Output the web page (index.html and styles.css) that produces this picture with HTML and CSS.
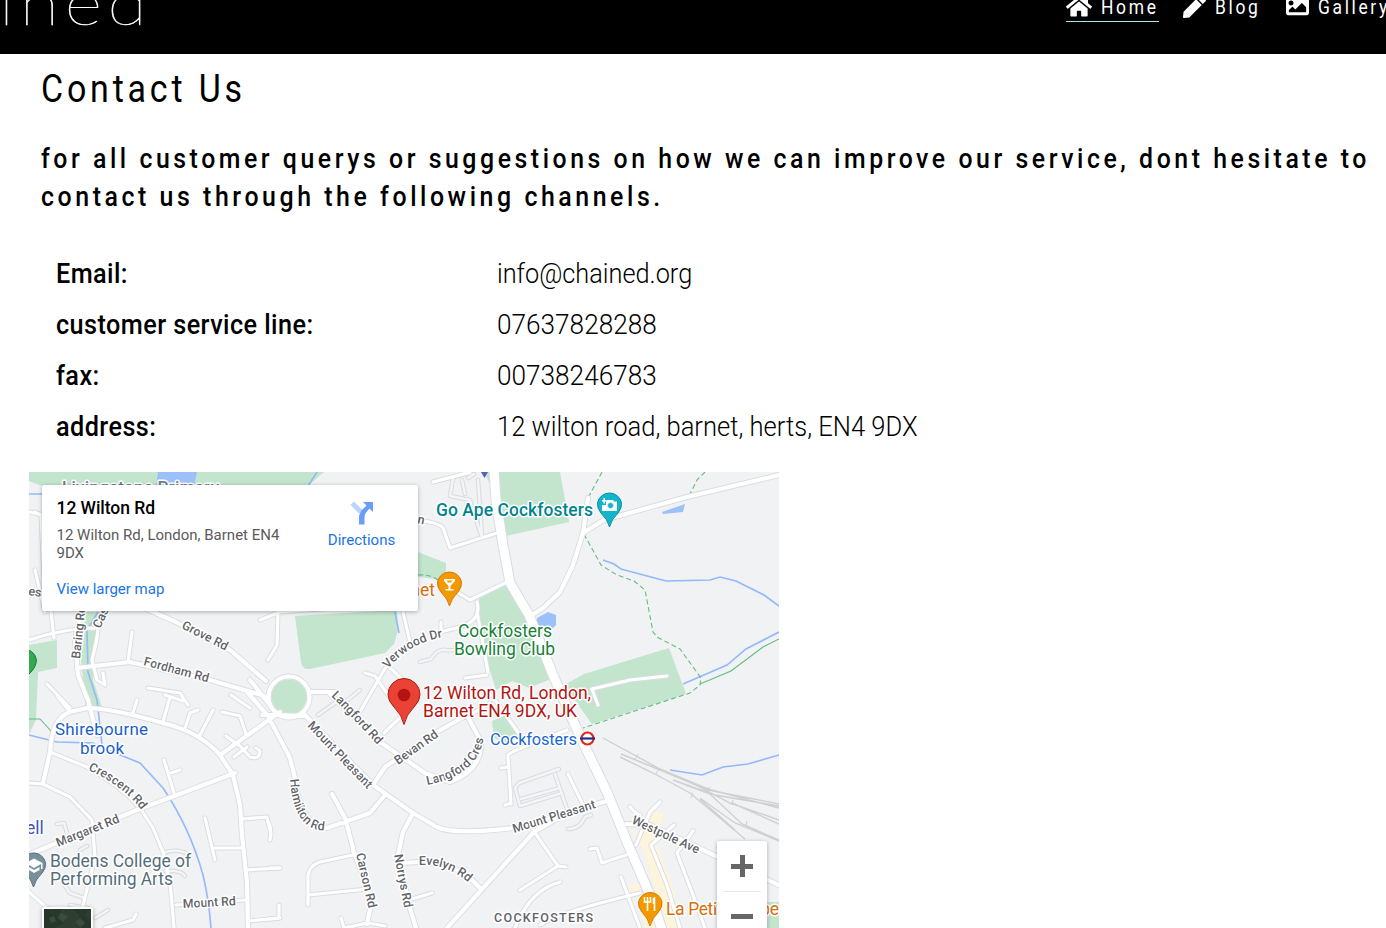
FILE: index.html
```html
<!DOCTYPE html>
<html lang="en">
<head>
<meta charset="utf-8">
<title>Chained - Contact Us</title>
<link rel="stylesheet" href="styles.css">
</head>
<body>
<header class="site-header">
  <div class="logo">ined</div>
  <nav class="nav">
    <a class="nav-link active"><svg class="icon icon-home" viewBox="0 0 576 512"><path d="M280.37 148.26L96 300.11V464a16 16 0 0 0 16 16l112.06-.29a16 16 0 0 0 15.92-16V368a16 16 0 0 1 16-16h64a16 16 0 0 1 16 16v95.64a16 16 0 0 0 16 16.05L464 480a16 16 0 0 0 16-16V300L295.67 148.26a12.19 12.19 0 0 0-15.3 0zM571.6 251.47L488 182.56V44.05a12 12 0 0 0-12-12h-56a12 12 0 0 0-12 12v72.61L318.47 43a48 48 0 0 0-61 0L4.34 251.47a12 12 0 0 0-1.6 16.9l25.5 31A12 12 0 0 0 45.15 301l235.22-193.74a12.19 12.19 0 0 1 15.3 0L530.9 301a12 12 0 0 0 16.9-1.6l25.5-31a12 12 0 0 0-1.7-16.93z"/></svg><span class="nav-text">Home</span></a>
    <a class="nav-link blog"><svg class="icon" viewBox="0 0 512 512"><path d="M290.74 93.24l128.02 128.02-277.99 277.99-114.14 12.6C11.35 513.54-1.56 500.62.14 485.34l12.7-114.22 277.9-277.88zm207.2-19.06l-60.11-60.11c-18.75-18.75-49.16-18.75-67.91 0l-56.55 56.55 128.02 128.02 56.55-56.55c18.75-18.76 18.75-49.16 0-67.91z"/></svg><span class="nav-text">Blog</span></a>
    <a class="nav-link"><svg class="icon" viewBox="0 0 512 512"><path d="M464 448H48c-26.51 0-48-21.49-48-48V112c0-26.51 21.49-48 48-48h416c26.51 0 48 21.49 48 48v288c0 26.51-21.49 48-48 48zM112 120c-30.928 0-56 25.072-56 56s25.072 56 56 56 56-25.072 56-56-25.072-56-56-56zM64 384h384V272l-87.515-87.515c-4.686-4.686-12.284-4.686-16.971 0L208 320l-55.515-55.515c-4.686-4.686-12.284-4.686-16.971 0L64 336v48z"/></svg><span class="nav-text">Gallery</span></a>
  </nav>
</header>
<main class="content">
  <h1 class="title"><span class="fit fit-title">Contact Us</span></h1>
  <p class="intro"><span class="fit fit-a">for all customer querys or suggestions on how we can improve our service, dont hesitate to</span><span class="fit fit-b">contact us through the following channels.</span></p>
  <dl class="details">
    <dt><span class="fit key">Email:</span></dt><dd><span class="fit mail">info@chained.org</span></dd>
    <dt><span class="fit key">customer service line:</span></dt><dd><span class="fit phone">07637828288</span></dd>
    <dt><span class="fit key">fax:</span></dt><dd><span class="fit phone">00738246783</span></dd>
    <dt><span class="fit key">address:</span></dt><dd><span class="fit street">12 wilton road, barnet, herts, EN4 9DX</span></dd>
  </dl>
  <section class="map">
    <svg class="map-canvas" viewBox="29 472 750 456">
      <defs>
        <g id="lanes">
          <path d="M433 482L470 473M453 479L450 496L470 500L481 535M462 480L465 494M468 478L474 474M478 480L482 535M420 662L431 659Q438 648 446 650L470 651"/>
          <path d="M515 788L520 806 562 793M515 788L519 783 559 769M555 774L568 812M521 799L560 788M568 829Q580 829 585 817L591 815"/>
          <path d="M57 824L64 823 69 840M80 850L87 846M163 853Q180 847 190 856M165 871Q182 870 185 876M95 918L108 910M60 878L70 893 84 898M70 905L88 908"/>
          <path d="M318 715L335 703 344 703 360 690"/>
        </g>
        <g id="streets">
          <path d="M29 640Q65 628 95 628M51 612L54 638M47 684L70 708M95 628Q102 620 92 660L97 680 105 685 103 673M128 662L132 632M148 688L180 693 188 705M133 713L137 700M170 697L163 722M165 695L183 701M185 728L190 713 198 710M200 735L213 710M226 736L240 746 250 757Q260 760 260 751L256 748M234 757L247 747M222 712L240 716 246 734M231 695L250 708M58 697L70 712M164 760L175 796M171 773L180 770M205 818L215 860M215 848L241 848M242 819L267 817 271 835M245 870L280 868M248 921L280 918M35 512L48 520M35 570L45 612"/>
          <path d="M29 512L45 515M41 515L45 600M270 868L280 868M270 919L279 918 279 905M270 840Q272 827 268 822M308 905L308 875Q310 865 320 862L353 855M308 895L368 889M341 918L344 928L368 923 385 926M412 899L432 893M433 482L470 472M418 520Q440 523 443 528L450 548 497 533M450 588L470 600 507 582M440 632L460 627Q482 620 477 602M441 632L441 622M410 642L403 612M387 665L358 715M365 673L375 676 388 695M387 665L405 682M487 675L465 678M477 612L488 672M260 620L280 612 400 603M278 610L277 645 268 660"/>
          <path d="M511 804L508 755 512 752 567 730M501 768L508 767M505 805L511 803M495 700L520 735M384 733L412 706M467 717L490 703M590 849L597 848 602 863 626 855M533 830L558 866 520 890M558 866L566 867M568 774L584 807M621 877L640 928M636 845L650 812 660 802M630 807Q635 813 640 815M674 825L651 845 667 885 680 928M693 831L677 853 693 895 705 928M515 928Q530 890 560 882M540 925Q560 912 640 893M592 689L630 680 667 676M592 689L598 705"/>
          <path d="M50 752L87 767Q120 785 140 808L153 828 163 852 170 882 174 928M29 783L43 784 70 797 92 820 95 858 83 905M29 892L47 908 60 928M176 905L245 900M105 928L133 920 136 914"/>
        </g>
        <g id="avenues">
          <path d="M43 783L50 752Q52 718 70 712L87 708Q110 708 163 723Q200 732 220 755L233 775 240 805 242 835 247 882 248 928M30 854L137 810 235 773M220 755L280 712M82 610L75 640 78 675 88 700 97 735M77 668L130 662 210 680 268 697M140 606L176 622 230 650 266 681M250 680L270 705M247 692L268 716 290 758 295 778Q300 825 327 828L370 813 385 795M262 715L280 715 303 716M303 713L373 785 413 813 437 827Q453 835 513 828L607 801M373 785L385 767 437 732 467 715 481 742Q482 770 450 782L425 773 380 742 330 694M332 794L345 818 353 848M353 850L365 880 371 905 367 924M413 813L403 832 398 855 410 908 416 928M400 863L420 862Q455 860 480 888M447 928L534 832 567 813M310 692L334 692"/>
          <circle cx="289" cy="697" r="20.5"/>
          <path d="M532 615L543 608 560 592 573 565 583 533 588 498M583 533L604 520 687 497 779 475M626 824L650 825 720 858 779 885"/>
        </g>
        <path id="trunk" d="M494 470L496 500 503 545 510 583 529 615 553 675 575 725 590 757 607 792 627 842 653 902 662 930"/>
        <path id="c-langford" d="M331 696Q355 720 382 750"/>
        <path id="c-mount" d="M307 726L369 791"/>
        <path id="c-hamilton" d="M290 779Q294 836 332 830"/>
        <path id="c-cres" d="M427 785Q480 775 484 735"/>
        <path id="c-crescent" d="M88 770Q125 786 145 815"/>
        <path id="c-evelyn" d="M419 865Q445 863 468 882"/>
        <path id="c-verwood" d="M388 669Q410 642 444 637"/>
      </defs>

      <rect class="land" x="29" y="472" width="750" height="456"/>
      <g class="park">
        <path d="M29 472H324L308 486H42L29 481z"/>
        <path d="M484 472H560L569 522 506 536 498 500z"/>
        <path d="M418 552L446 563V580L418 577z"/>
        <path d="M295 616L397 610 398 630 394 644 385 653 310 669Q302 670 301 662z"/>
        <path d="M479 596L509 583 553 678 529 688 512 681 496 690 480 638z"/>
        <path d="M564 685L584 674 669 648 686 694 592 724z"/>
        <path d="M492 721L505 716 518 733 508 745 494 738z"/>
        <path d="M29 645L57 640V668L38 672 36 720 29 734z"/>
        <path d="M86 612H110L96 626 93 680 103 710H86L80 650z"/>
        <circle cx="289" cy="697" r="17.5"/>
        <path d="M767 902H779V928H767z"/>
      </g>
      <g class="shops"><path d="M630 827L640 835 655 811 664 814 656 842 674 890 678 928H665L644 850zM628 884L638 884 641 892 631 894zM637 900L650 895 662 928H645z"/></g>
      <g class="water-fill"><path d="M158 472H197L194 486H156zM537 618L548 612 556 615V625L553 628H537zM662 512L685 504 683 512 663 514z"/></g>
      <g class="water">
        <path d="M29 494H42M98 612L87 630 88 672 97 700 102 745M29 735L57 742 93 743 103 748 140 763 163 788Q190 828 203 875Q209 900 211 928M317 472L308 486M395 612L399 633"/>
        <path d="M603 560L614 564 621 569 666 581 710 580 720 577 736 581 764 595 779 606M683 684L727 665 746 649 779 632M670 770L702 775 723 767 748 764 779 755"/>
      </g>
      <g class="trail">
        <path class="dash" d="M602 472L588 498M584 534L601 565 617 575 634 581 645 590 653 632 657 637 680 649 701 678 700 685 690 693 583 728M705 472L697 480 689 496M418 575Q430 574 438 580"/>
        <path d="M700 684L731 671 763 647 779 639M29 719H40L51 731"/>
      </g>
      <g class="rail">
        <path d="M603 738L660 769 708 789 779 808M621 754L660 770 708 790 779 804M620 757L655 774 690 793 745 839M621 754L690 782 730 803 779 820M673 780L715 795 779 806M673 780L710 794 742 824 779 840M700 798L735 823 779 841M732 803L779 824M700 799L735 830"/>
        <path class="thin" d="M638 754l-3 5M659 768l-3 6M693 793l-2 5M709 787l-1 6M733 800l-1 5M747 821l-1 5"/>
      </g>

      <use class="case lane-case" href="#lanes"/>
      <use class="case street-case" href="#streets"/>
      <use class="case avenue-case" href="#avenues"/>
      <use class="case trunk-case" href="#trunk"/>
      <use class="fill lane-fill" href="#lanes"/>
      <use class="fill street-fill" href="#streets"/>
      <use class="fill avenue-fill" href="#avenues"/>
      <use class="fill trunk-fill" href="#trunk"/>

      <g class="label road">
        <text x="62" y="493" class="school" textLength="157">Livingstone Primary</text>
        <text x="28" y="595" transform="rotate(8 28 595)">es</text>
        <text x="417" y="523" transform="rotate(12 417 523)">n</text>
        <text transform="translate(80 659) rotate(-84)" textLength="53">Baring Rd</text>
        <text transform="translate(100 629) rotate(-65)">Cas</text>
        <text transform="translate(181 628) rotate(27)" textLength="50">Grove Rd</text>
        <text transform="translate(143 665) rotate(15)" textLength="67">Fordham Rd</text>
        <text><textPath href="#c-verwood">Verwood Dr</textPath></text>
        <text><textPath href="#c-langford">Langford Rd</textPath></text>
        <text><textPath href="#c-mount">Mount Pleasant</textPath></text>
        <text transform="translate(398 765) rotate(-35)" textLength="50">Bevan Rd</text>
        <text><textPath href="#c-cres">Langford Cres</textPath></text>
        <text><textPath href="#c-hamilton">Hamilton Rd</textPath></text>
        <text><textPath href="#c-crescent">Crescent Rd</textPath></text>
        <text transform="translate(58 847) rotate(-22)" textLength="67">Margaret Rd</text>
        <text transform="translate(183 908) rotate(-3)" textLength="53">Mount Rd</text>
        <text transform="translate(356 854) rotate(77)" textLength="56">Carson Rd</text>
        <text transform="translate(394 855) rotate(79)" textLength="54">Norrys Rd</text>
        <text><textPath href="#c-evelyn">Evelyn Rd</textPath></text>
        <text transform="translate(514 833) rotate(-17)" textLength="86">Mount Pleasant</text>
        <text transform="translate(631 823) rotate(25)" textLength="73">Westpole Ave</text>
        <text x="494" y="922" class="area" textLength="99">COCKFOSTERS</text>
      </g>
      <g class="label place">
        <text class="teal" x="436" y="516" textLength="157">Go Ape Cockfosters</text>
        <text class="orange" x="435" y="596" text-anchor="end">inet</text>
        <text class="green" x="458" y="637" textLength="94">Cockfosters</text>
        <text class="green" x="454" y="655" textLength="101">Bowling Club</text>
        <text class="red" x="423" y="699" textLength="168">12 Wilton Rd, London,</text>
        <text class="red" x="423" y="717" textLength="154">Barnet EN4 9DX, UK</text>
        <text class="transit" x="490" y="745" textLength="87">Cockfosters</text>
        <text class="stream" x="55" y="735" textLength="93">Shirebourne</text>
        <text class="stream" x="80" y="754" textLength="44">brook</text>
        <text class="indigo" x="26" y="834">ell</text>
        <text class="slate" x="50" y="867" textLength="141">Bodens College of</text>
        <text class="slate" x="50" y="885" textLength="123">Performing Arts</text>
        <text class="orange" x="666" y="915" textLength="113">La Petite Crepe</text>
      </g>

      <g class="station"><circle cx="587.5" cy="738.5" r="6"/><path d="M580 738.5H595"/></g>
      <path d="M481 472H488L484.500 478z" fill="#5461b8"/>

      <g class="pins">
        <path fill="#12b5cb" stroke="#0b8b9c" d="M609.500 527Q608 520 601 513Q597 508 597.500 503A12.200 12.200 0 0 1 621.500 503Q622 508 618 513Q611 520 609.500 527z"/>
        <path fill="#fff" d="M606 502L607 500H613L614 501.500H617V511H602V505H606zM602 500h1.500v-2h1.500v2h1.500v1.500h-1.500v2h-1.500v-2H602z"/>
        <circle cx="610.500" cy="505.500" r="3" fill="#12b5cb" stroke="#fff" stroke-width=".6"/>
        <path fill="#f29900" stroke="#d87800" d="M449.500 606Q448 599 441 592Q437 587 437.500 582A12.200 12.200 0 0 1 461.500 582Q462 587 458 592Q451 599 449.500 606z"/>
        <path fill="#fff" d="M444 579H455V581L450.500 586V589H453.500V590.500H445.500V589H448.500V586L444 581z"/>
        <path fill="#f29900" d="M446.500 580.500L448 582.500H451L452.500 580.500z"/>
        <path fill="#f29900" stroke="#d87800" d="M650 926Q648.500 919 642 912Q638 907 638.500 902A12 12 0 0 1 662 902Q662.500 907 658.500 912Q651.500 919 650 926z"/>
        <path fill="none" stroke="#fff" stroke-width="1.600" d="M644.500 897V902H650.500V897M647.500 897V911M654.500 897V911M653.500 898V904"/>
        <path fill="#78909c" stroke="#546e7a" d="M33.500 887Q32 880 25 873Q20 867 22 861A12.200 12.200 0 0 1 45.500 863Q46 869 42 873Q35 880 33.500 887z"/>
        <path fill="#fff" d="M26 863L34 858.500 42.500 863V869H41V864L34 868zM29 867L34 870 39.500 867V870L34 873 29 870z"/>
        <path fill="#34a853" stroke="#188038" d="M22 649A13 13 0 0 1 36.500 660Q36 668 29 674H22z"/>
        <path fill="#ea4335" stroke="#b31412" d="M404 724.500Q402 715 394 707Q388 701 388 694.500A16 16 0 0 1 420 694.500Q420 701 414 707Q406 715 404 724.500z"/>
        <circle cx="404" cy="695" r="6.300" fill="#b31412"/>
      </g>
    </svg>

    <div class="place-card">
      <div class="place-info">
        <div class="place-name">12 Wilton Rd</div>
        <div class="place-address">12 Wilton Rd, London, Barnet EN4 9DX</div>
        <a class="place-link">View larger map</a>
      </div>
      <div class="directions">
        <svg class="directions-icon" viewBox="0 0 24 24"><path fill="#bbd3fd" d="M.5 4L4 .5 12.500 9 9 12.500z"/><path fill="#6a9cf8" d="M13 1H23V11L19.500 7.500 16 11.500Q14.500 13.500 14.500 17V23.500H9V17Q9 12 12 9L16.500 4.500z"/></svg>
        <span>Directions</span>
      </div>
    </div>

    <div class="thumb"><svg viewBox="0 0 47 36"><path fill="#2e3f31" d="M0 0H47V36H0z"/><path fill="#26382b" d="M0 0H18L13 8 20 14 10 19H0zM29 0L36 7 32 13 39 19H47V12L40 5 47 0z"/><path fill="#3b4d39" d="M17 4l7 3-5 6-5-4zM31 13l5-4 5 5-4 4zM5 9l5-2 2 5-5 2z"/></svg></div>
    <div class="zoom-box"><span class="plus"></span><span class="divider"></span><span class="minus"></span></div>
  </section>
</main>
</body>
</html>
```
FILE: styles.css
```css
* { box-sizing: border-box; }
html, body { height: 928px; overflow: hidden; }
body { margin: 0; background: #fff; color: #000; font-family: Roboto, "Liberation Sans", sans-serif; }

.site-header { height: 54px; overflow: hidden; background: #000; color: #fff; display: flex; justify-content: space-between; align-items: flex-start; }
.logo { margin: -33px 0 0 -1px; font: 100 60px/70px Lato, sans-serif; letter-spacing: 4.8px; white-space: nowrap; transform: scaleX(1.2); transform-origin: 0 0; -webkit-text-stroke: .5px #fff; }
.nav { display: flex; flex: 0 0 320px; width: 320px; margin-top: -8px; }
.nav-link { display: flex; flex: none; align-items: flex-start; height: 30px; }
.nav-link.active { width: 93px; border-bottom: 1px solid #a5e6ec; margin-right: 24px; }
.nav-link.blog { width: 79px; margin-right: 24px; }
.icon { flex: none; width: 23px; height: 23px; margin-top: 3px; fill: #fff; }
.icon-home { width: 26px; }
.nav-text { margin-left: 9px; font-size: 21px; line-height: 31px; font-weight: 400; letter-spacing: 3.2px; transform: scaleX(.83); transform-origin: 0 0; white-space: nowrap; }

.fit { display: block; width: max-content; white-space: nowrap; transform-origin: 0 50%; }
.title { margin: 0; padding: 11px 0 0 41px; font-size: 39px; line-height: 48px; font-weight: 400; letter-spacing: 4.4px; }
.fit-title { transform: scaleX(.87); }
.intro { margin: 27px 0 0 41px; font-size: 28px; line-height: 38px; font-weight: 500; letter-spacing: 4px; }
.fit-a { transform: scaleX(.887); }
.fit-b { transform: scaleX(.889); }
.details { display: grid; grid-template-columns: 441px 1fr; grid-auto-rows: 51px; margin: 32px 0 0 56px; font-size: 28px; line-height: 51px; }
.details dt { font-weight: 500; }
.details dd { margin: 0; font-weight: 300; }
.key { letter-spacing: .5px; transform: scaleX(.9); }
.mail { transform: scaleX(.904); }
.phone { transform: scaleX(.935); }
.street { transform: scaleX(.912); }

.map { position: relative; width: 750px; height: 456px; margin: 20px 0 0 29px; overflow: hidden; }
.map-canvas { display: block; width: 750px; height: 456px; }
.land { fill: #f1f2f4; }
.park { fill: #c3e4cd; }
.shops { fill: #fdf4dc; }
.water-fill { fill: #9cc0f9; }
.water { fill: none; stroke: #93b9fa; stroke-width: 1.6; }
.trail { fill: none; stroke: #65bb80; stroke-width: 1.1; }
.dash { stroke-dasharray: 5 3; }
.rail { fill: none; stroke: #ced0d2; stroke-width: 1.4; }
.thin { stroke-width: 1; }
.case, .fill { fill: none; stroke-linecap: round; stroke-linejoin: round; }
.case { stroke: #dadce0; }
.fill { stroke: #fff; }
.lane-case { stroke-width: 4.6; }
.lane-fill { stroke-width: 2.4; stroke: #f4f5f6; }
.street-case { stroke-width: 5; }
.street-fill { stroke-width: 3.2; }
.avenue-case { stroke-width: 6; }
.avenue-fill { stroke-width: 4.2; }
.trunk-case { stroke-width: 11; }
.trunk-fill { stroke-width: 9; }
.label { paint-order: stroke; stroke: #fff; stroke-width: 3px; stroke-linejoin: round; }
.road { font-size: 12.4px; fill: #5f6368; font-weight: 500; }
.school { font-size: 17px; fill: #70808a; }
.area { font-size: 12.5px; }
.place { font-size: 17.5px; }
.teal { fill: #00838f; font-weight: 500; font-size: 17.5px; }
.orange { fill: #d56e0c; }
.green { fill: #188038; }
.red { fill: #b31412; }
.transit { fill: #1967d2; font-size: 16.5px; }
.stream { fill: #1a5dc8; font-size: 17px; }
.indigo { fill: #4550c0; }
.slate { fill: #546e7a; }
.station circle { fill: #fff; stroke: #e1251b; stroke-width: 2.2; }
.station path { stroke: #1c2f8c; stroke-width: 2.2; }

.place-card { position: absolute; left: 13px; top: 13px; width: 376px; height: 126px; padding: 13px 15px 13px 14.5px; display: flex; justify-content: space-between; background: #fff; border-radius: 2px; box-shadow: 0 1px 4px rgba(0,0,0,.3); }
.place-info { width: 240px; }
.place-name { font-size: 17.5px; line-height: 20px; font-weight: 500; letter-spacing: -.05px; }
.place-address { margin-top: 8px; font-size: 15px; line-height: 18px; color: #5b5b5b; }
.place-link { display: block; margin-top: 18px; font-size: 15px; line-height: 18px; color: #1a73e8; }
.directions { display: flex; flex-direction: column; align-items: center; width: 83px; font-size: 15px; line-height: 18px; color: #1a73e8; }
.directions-icon { width: 24px; height: 24px; margin: 3px 0 6px; }
.thumb { position: absolute; left: 13px; top: 435px; width: 51px; height: 40px; border: 2px solid #fff; border-radius: 2px; box-shadow: 0 1px 4px rgba(0,0,0,.3); }
.thumb svg { display: block; width: 47px; height: 36px; }
.zoom-box { position: absolute; left: 688px; top: 369px; width: 50px; height: 101px; display: flex; flex-direction: column; align-items: center; background: #fff; border-radius: 2px; box-shadow: 0 1px 4px rgba(0,0,0,.3); }
.plus { width: 22px; height: 22px; margin-top: 14px; background: linear-gradient(#666, #666) center / 22px 5px no-repeat, linear-gradient(#666, #666) center / 5px 22px no-repeat; }
.divider { width: 37px; height: 1px; margin-top: 14px; background: #e6e6e6; }
.minus { width: 22px; height: 5px; margin-top: 22px; background: #666; }
```
